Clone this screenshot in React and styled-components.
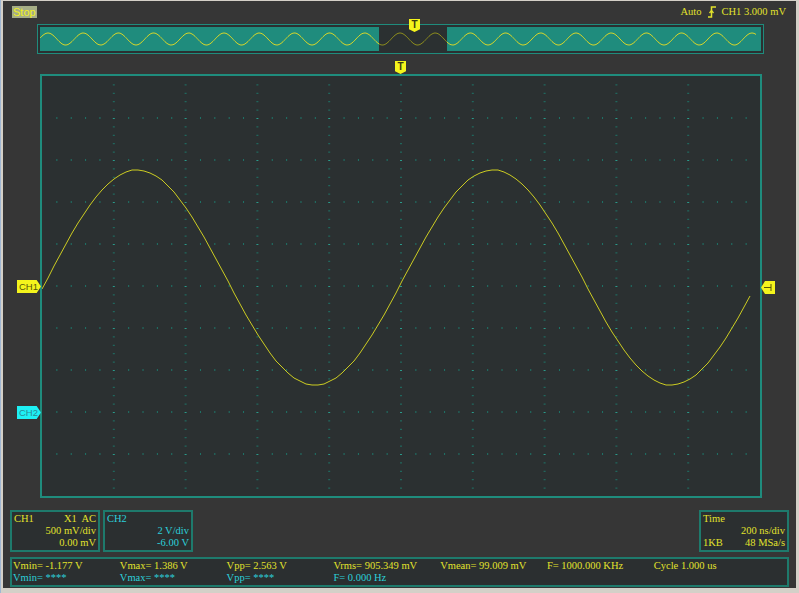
import React from 'react';
import styled, { createGlobalStyle } from 'styled-components';

const YELLOW = '#e2e22c';
const CYAN = '#2cd0da';
const TEAL = '#1f8c7d';
const BOXLINE = '#1e7a6c';

const GlobalStyle = createGlobalStyle`
  html, body {
    margin: 0;
    padding: 0;
    background: #d4d0c8;
    overflow: hidden;
  }
  body {
    font-family: "Liberation Serif", "Times New Roman", serif;
  }
`;

const Frame = styled.div`
  width: 799px;
  height: 593px;
  box-sizing: border-box;
  padding: 1px 3px 5px 2px;
  border-left: 1px solid #9fb6d2;
  background: #d4d0c8;
`;

const Screen = styled.div`
  height: 587px;
  background: #363636;
  display: flex;
  flex-direction: column;
`;

const TopBar = styled.div`
  height: 21px;
  box-sizing: border-box;
  padding: 5px 10px 0 9px;
  display: flex;
  justify-content: space-between;
  align-items: flex-start;
`;

const StopTag = styled.span`
  background: #a6ae86;
  color: #f2f21e;
  font-family: "Liberation Sans", Arial, sans-serif;
  font-size: 11px;
  line-height: 12px;
  height: 12px;
  padding: 0 1px;
`;

const TrigInfo = styled.div`
  display: flex;
  align-items: center;
  gap: 6px;
  color: ${YELLOW};
  font-size: 10.5px;
  line-height: 12px;
`;

const Overview = styled.div`
  position: relative;
  margin: 2px 0 0 34px;
  width: 727px;
  height: 30px;
  box-sizing: border-box;
  border: 1px solid ${TEAL};
  padding: 2px;
  background: #2b3031;
  svg { display: block; }
`;

const TBadge = styled.div`
  position: absolute;
  left: ${(p) => p.$x}px;
  top: ${(p) => p.$y}px;
  width: 11px;
  height: 13px;
  background: #f4f41c;
  clip-path: polygon(0 0, 100% 0, 100% 78%, 50% 100%, 0 78%);
  color: #3a3a10;
  font-family: "Liberation Sans", Arial, sans-serif;
  font-size: 10px;
  font-weight: bold;
  line-height: 11px;
  text-align: center;
`;

const Plot = styled.div`
  position: relative;
  margin: 20px 0 0 37px;
  width: 722px;
  height: 424px;
  box-sizing: border-box;
  border: 2px solid ${TEAL};
  background: #2b3031;
  svg { display: block; }
`;

const ChMarker = styled.div`
  position: absolute;
  left: -25px;
  top: ${(p) => p.$y}px;
  width: 24px;
  height: 13px;
  box-sizing: border-box;
  padding-left: 2px;
  background: ${(p) => p.$bg};
  color: ${(p) => p.$fg};
  clip-path: polygon(0 0, 82% 0, 100% 50%, 82% 100%, 0 100%);
  font-family: "Liberation Sans", Arial, sans-serif;
  font-size: 9.5px;
  line-height: 13px;
`;

const LevelMarker = styled.svg`
  position: absolute;
  left: 719px;
  top: 205px;
`;

const InfoRow = styled.div`
  display: flex;
  gap: 3px;
  margin-top: 12px;
  padding: 0 7px;
  height: 42px;
`;

const InfoBox = styled.div`
  width: 90px;
  height: 42px;
  box-sizing: border-box;
  border: 2px solid ${BOXLINE};
  background: #2b2f30;
  padding: 1px 2px 0 2px;
  color: ${(p) => p.$color};
  font-size: 10.5px;
  line-height: 12px;
  margin-left: ${(p) => (p.$right ? 'auto' : '0')};
`;

const InfoLine = styled.div`
  display: flex;
  justify-content: ${(p) => (p.$end ? 'flex-end' : 'space-between')};
  white-space: pre;
`;

const MeasureBox = styled.div`
  margin: 5px 7px 0 7px;
  height: 30px;
  box-sizing: border-box;
  border: 2px solid ${BOXLINE};
  background: #2b2f30;
  padding: 1px 1px 0 1px;
  display: grid;
  grid-template-columns: repeat(7, 106.8px);
  grid-auto-rows: 12px;
  font-size: 10.5px;
  line-height: 12px;
`;

const Cell = styled.span`
  color: ${(p) => p.$color};
  white-space: pre;
`;

const PW = 718;
const PH = 420;

function gridMarks() {
  const marks = [];
  const dx = PW / 10;
  const dy = PH / 10;
  for (let k = 1; k < 10; k++) {
    const x = k * dx;
    for (let j = 1; j < 50; j++) {
      const y = j * (dy / 5);
      const major = j % 5 === 0;
      marks.push(
        <rect key={`v${k}-${j}`} x={x - 1} y={y} width={2} height={1} fill={major ? '#2a9a8a' : '#1f7468'} />
      );
    }
  }
  for (let m = 1; m < 10; m++) {
    const y = m * dy;
    for (let i = 1; i < 50; i++) {
      if (i % 5 === 0) continue;
      const x = i * (dx / 5);
      marks.push(<rect key={`h${m}-${i}`} x={x} y={y - 1} width={1} height={2} fill="#1f7468" />);
    }
  }
  return marks;
}

// sampled trace, slightly stepped like the scope's own drawing
function mainWave() {
  const pts = [];
  for (let x = 0; x <= 708; x += 6) {
    const y = 201.5 - 107.5 * Math.cos((2 * Math.PI * (x - 95)) / 356);
    pts.push(`${x},${Math.round(y)}`);
  }
  return pts.join(' ');
}

function miniWave(from, to) {
  const pts = [];
  for (let x = from; x <= to; x += 1) {
    const y = 12 - 6 * Math.cos((2 * Math.PI * (x - 8)) / 35.2);
    pts.push(`${x},${y.toFixed(1)}`);
  }
  return pts.join(' ');
}

function EdgeIcon() {
  return (
    <svg width="8" height="12" viewBox="0 0 8 12">
      <path d="M0 11 H3.5 V1 H8" stroke={YELLOW} strokeWidth="1.5" fill="none" />
      <path d="M1.5 7 L3.5 4.5 L5.5 7" stroke={YELLOW} strokeWidth="1.3" fill="none" />
    </svg>
  );
}

const rowOne = [
  'Vmin= -1.177 V',
  'Vmax= 1.386 V',
  'Vpp= 2.563 V',
  'Vrms= 905.349 mV',
  'Vmean= 99.009 mV',
  'F= 1000.000 KHz',
  'Cycle 1.000 us',
];
const rowTwo = ['Vmin= ****', 'Vmax= ****', 'Vpp= ****', 'F= 0.000 Hz', '', '', ''];

export default function App() {
  return (
    <>
      <GlobalStyle />
      <Frame>
        <Screen>
          <TopBar>
            <StopTag>Stop</StopTag>
            <TrigInfo>
              <span>Auto</span>
              <EdgeIcon />
              <span>CH1 3.000 mV</span>
            </TrigInfo>
          </TopBar>

          <Overview>
            <svg width="721" height="24">
              <rect x="0" y="0" width="721" height="24" fill="#1f8c7d" />
              <rect x="339" y="0" width="68" height="24" fill="#2b3031" />
              <polyline points={miniWave(0, 339)} stroke="#d6d62a" strokeWidth="1" fill="none" />
              <polyline points={miniWave(339, 407)} stroke="#8c8c1e" strokeWidth="1" fill="none" />
              <polyline points={miniWave(407, 716)} stroke="#d6d62a" strokeWidth="1" fill="none" />
            </svg>
            <TBadge $x={371} $y={-6}>T</TBadge>
          </Overview>

          <Plot>
            <TBadge $x={353} $y={-15}>T</TBadge>
            <svg width={PW} height={PH}>
              {gridMarks()}
              <polyline points={mainWave()} stroke="#cccc22" strokeWidth="1" fill="none" />
            </svg>
            <ChMarker $y={204} $bg="#f4f41c" $fg="#55550a">CH1</ChMarker>
            <ChMarker $y={330} $bg="#1ef0f4" $fg="#2a8a96">CH2</ChMarker>
            <LevelMarker width="14" height="13" viewBox="0 0 14 13">
              <path d="M0 6.5 L4 0 H14 V13 H4 Z" fill="#f4f41c" />
              <path d="M3 6.5 H10 M10 3 V10" stroke="#55550a" strokeWidth="1" />
            </LevelMarker>
          </Plot>

          <InfoRow>
            <InfoBox $color={YELLOW}>
              <InfoLine>
                <span>CH1</span>
                <span>X1  AC</span>
              </InfoLine>
              <InfoLine $end>500 mV/div</InfoLine>
              <InfoLine $end>0.00 mV</InfoLine>
            </InfoBox>
            <InfoBox $color={CYAN}>
              <InfoLine>CH2</InfoLine>
              <InfoLine $end>2 V/div</InfoLine>
              <InfoLine $end>-6.00 V</InfoLine>
            </InfoBox>
            <InfoBox $color={YELLOW} $right>
              <InfoLine>Time</InfoLine>
              <InfoLine $end>200 ns/div</InfoLine>
              <InfoLine>
                <span>1KB</span>
                <span>48 MSa/s</span>
              </InfoLine>
            </InfoBox>
          </InfoRow>

          <MeasureBox>
            {rowOne.map((t, i) => (
              <Cell key={`a${i}`} $color={YELLOW}>{t}</Cell>
            ))}
            {rowTwo.map((t, i) => (
              <Cell key={`b${i}`} $color={CYAN}>{t}</Cell>
            ))}
          </MeasureBox>
        </Screen>
      </Frame>
    </>
  );
}
